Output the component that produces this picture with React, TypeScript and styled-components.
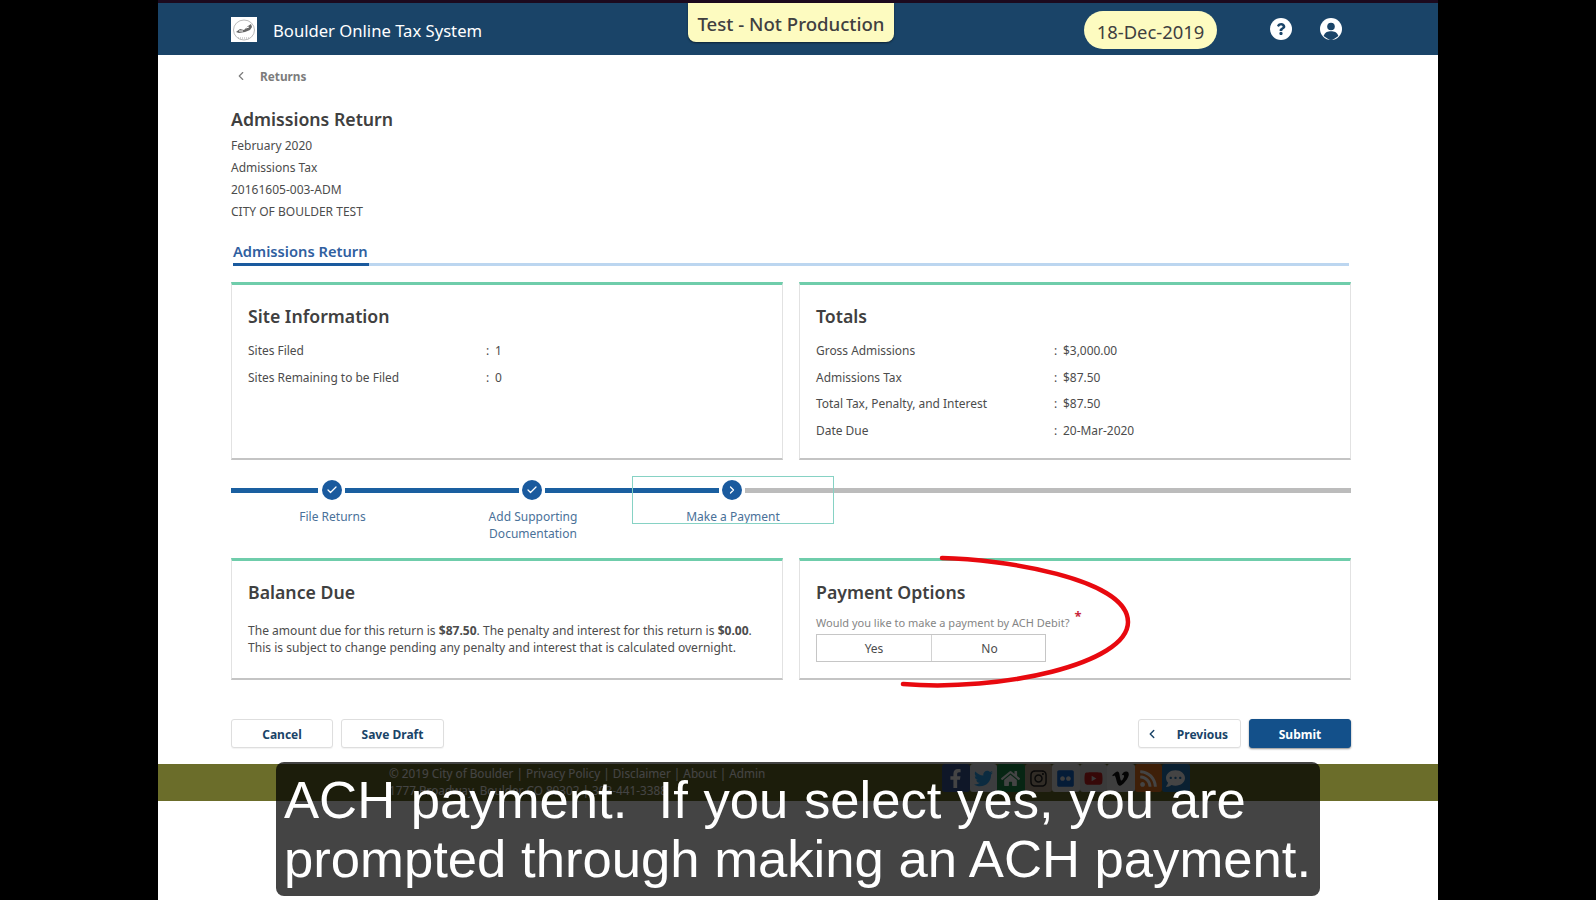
import React from "react";
import styled, { createGlobalStyle } from "styled-components";
import { Check, ChevronLeft, ChevronRight } from "lucide-react";
import { FaFacebookF, FaTwitter, FaHome, FaInstagram, FaFlickr, FaYoutube, FaVimeoV, FaRss, FaCommentDots, FaQuestion } from "react-icons/fa";

const Global = createGlobalStyle`
  html, body { margin: 0; padding: 0; background: #000; }
  body { font-family: "Noto Sans", "Open Sans", sans-serif; color: #3b3b3b; }
  *, *::before, *::after { box-sizing: border-box; }
`;

const Screen = styled.div`
  position: relative;
  width: 1596px;
  height: 900px;
  overflow: hidden;
  background: #000;
  display: flex;
  justify-content: center;
`;
const Page = styled.div`
  width: 1280px;
  height: 900px;
  background: #fff;
  border-top: 3px solid #1c0a1e;
  display: flex;
  flex-direction: column;
`;
const Header = styled.header`
  height: 52px;
  flex: none;
  background: #1a4468;
  position: relative;
  display: flex;
  align-items: center;
  padding: 0 83px 0 73px;
`;
const Logo = styled.svg`
  width: 26px;
  height: 25px;
  flex: none;
  margin-right: 16px;
`;
const AppTitle = styled.div`
  color: #fff;
  font-size: 16.65px;
  width: 415px;
  flex: none;
  padding-top: 2px;
`;
const TestBadge = styled.div`
  width: 206px;
  height: 39px;
  flex: none;
  align-self: flex-start;
  padding-top: 2px;
  background: #fdfbc0;
  border-radius: 0 0 8px 8px;
  box-shadow: 0 1px 2px rgba(0, 0, 0, 0.5);
  color: #404040;
  font-size: 18.6px;
  font-weight: 500;
  display: flex;
  align-items: center;
  justify-content: center;
`;
const DatePill = styled.div`
  width: 133px;
  height: 38px;
  flex: none;
  margin-left: 190px;
  margin-top: 2px;
  padding-top: 2px;
  border-radius: 19px;
  background: #fdfbc0;
  color: #404040;
  font-size: 18.4px;
  display: flex;
  align-items: center;
  justify-content: center;
`;
const RoundIcon = styled.div<{ $gap: number }>`
  width: 22px;
  height: 22px;
  flex: none;
  margin-left: ${(p) => p.$gap}px;
  margin-top: -1px;
  border-radius: 50%;
  background: #fff;
  color: #1a4468;
  display: flex;
  align-items: center;
  justify-content: center;
  overflow: hidden;
`;
const Main = styled.main`
  padding: 0 87px 0 73px;
  flex: none;
`;
const BackRow = styled.div`
  height: 42px;
  display: flex;
  align-items: center;
  color: #7c7c7c;
  font-size: 11.8px;
  font-weight: 700;
  padding-left: 3px;
  gap: 12px;
`;
const PageTitle = styled.h1`
  margin: 10px 0 4px;
  font-size: 17.7px;
  line-height: 24px;
  font-weight: 600;
  color: #404040;
`;
const MetaLine = styled.div`
  font-size: 12px;
  line-height: 22px;
  color: #4c4c4c;
`;
const TabRail = styled.div`
  margin: 17px 2px 16px;
  border-bottom: 3px solid #bcd6f0;
  height: 26px;
`;
const Tab = styled.div`
  display: inline-block;
  height: 26px;
  width: 136px;
  border-bottom: 3px solid #1a5a9e;
  color: #30609f;
  font-size: 14.7px;
  font-weight: 600;
  line-height: 22px;
  white-space: nowrap;
`;
const CardGrid = styled.div`
  display: grid;
  grid-template-columns: 1fr 1fr;
  gap: 16px;
`;
const Card = styled.section<{ $h: number }>`
  height: ${(p) => p.$h}px;
  border: 1px solid #e2e2e2;
  border-top: 3px solid #6fcdab;
  border-bottom: 2px solid #c4c4c4;
  padding: 19px 16px 0;
`;
const CardTitle = styled.h2`
  margin: 0;
  font-size: 17.7px;
  line-height: 24px;
  font-weight: 600;
  color: #404040;
`;
const InfoList = styled.div`
  margin-top: 10px;
`;
const InfoRow = styled.div`
  display: grid;
  grid-template-columns: 238px 9px 1fr;
  font-size: 11.95px;
  line-height: 26.5px;
  color: #4c4c4c;
`;
const Stepper = styled.div`
  display: grid;
  grid-template-columns: 201px 200px 200px 1fr;
  height: 82px;
  margin-top: 16px;
`;
const Step = styled.div<{ $boxed?: boolean }>`
  position: relative;
  &::after {
    content: "";
    display: ${(p) => (p.$boxed ? "block" : "none")};
    position: absolute;
    left: 0;
    top: 0;
    width: 202px;
    height: 48px;
    border: 1px solid #86d2c4;
  }
`;
const Rail = styled.div`
  height: 28px;
  display: flex;
  align-items: center;
  gap: 3px;
`;
const Line = styled.div<{ $off?: boolean }>`
  flex: 1;
  height: 5px;
  background: ${(p) => (p.$off ? "#bcbcbc" : "#1a5fa0")};
`;
const Dot = styled.div<{ $nudge?: boolean }>`
  width: 20px;
  height: 20px;
  flex: none;
  margin-left: ${(p) => (p.$nudge ? 1 : 0)}px;
  border-radius: 50%;
  background: #1a5a9e;
  color: #fff;
  display: flex;
  align-items: center;
  justify-content: center;
`;
const StepLabel = styled.div`
  margin: 5px auto 0;
  width: 120px;
  padding-left: 2px;
  text-align: center;
  font-size: 12px;
  line-height: 16.5px;
  color: #4a7199;
`;
const Paragraph = styled.p`
  margin: 18px 0 0;
  font-size: 12.05px;
  line-height: 17px;
  color: #4c4c4c;
  white-space: nowrap;
`;
const Question = styled.div`
  margin-top: 10px;
  height: 17px;
  font-size: 11px;
  line-height: 17px;
  color: #858585;
`;
const Star = styled.span`
  color: #c8283c;
  font-size: 13px;
  font-weight: 700;
  margin-left: 5px;
  position: relative;
  top: -6px;
`;
const Toggle = styled.div`
  display: grid;
  grid-template-columns: 114px 116px;
  width: 230px;
  height: 28px;
  margin-top: 3px;
  border: 1px solid #c6c6c6;
`;
const ToggleOption = styled.div<{ $divider?: boolean }>`
  border-left: ${(p) => (p.$divider ? "1px solid #d2d2d2" : "none")};
  display: flex;
  align-items: center;
  justify-content: center;
  font-size: 12px;
  color: #4c4c4c;
`;
const Actions = styled.div`
  display: flex;
  margin-top: 39px;
  gap: 8px;
`;
const Spacer = styled.div`
  flex: 1;
`;
const Btn = styled.button<{ $w: number; $primary?: boolean; $icon?: boolean }>`
  width: ${(p) => p.$w}px;
  height: 29px;
  padding: 1px ${(p) => (p.$icon ? 6 : 0)}px 0 0;
  border: 1px solid ${(p) => (p.$primary ? "#13508a" : "#dedede")};
  border-radius: 3px;
  background: ${(p) => (p.$primary ? "#13508a" : "#fff")};
  color: ${(p) => (p.$primary ? "#fff" : "#1a4468")};
  box-shadow: ${(p) => (p.$primary ? "0 1px 2px rgba(0,0,0,.45)" : "0 1px 1px rgba(0,0,0,.05)")};
  font-family: inherit;
  font-size: 12px;
  font-weight: 700;
  display: flex;
  align-items: center;
  justify-content: center;
  gap: ${(p) => (p.$icon ? 18 : 0)}px;
`;
const Footer = styled.footer`
  margin-top: 16px;
  height: 37px;
  flex: none;
  background: #6b6d2a;
  display: flex;
  padding-left: 231px;
`;
const FooterText = styled.div`
  width: 553px;
  flex: none;
  color: #fff;
  font-size: 11.75px;
  line-height: 17px;
  padding-top: 1px;
  white-space: nowrap;
`;
const Socials = styled.div`
  display: flex;
  height: 28px;
`;
const Social = styled.div<{ $bg: string; $fg: string }>`
  width: 27.5px;
  height: 28px;
  border-radius: 3px;
  background: ${(p) => p.$bg};
  color: ${(p) => p.$fg};
  font-size: 19px;
  display: flex;
  align-items: center;
  justify-content: center;
`;
const Caption = styled.div`
  position: absolute;
  left: 276px;
  top: 762px;
  width: 1044px;
  height: 134px;
  padding: 9px 0 0 8px;
  border-radius: 8px;
  background: rgba(0, 0, 0, 0.733);
  color: #fff;
  font-family: "Liberation Sans", Arial, sans-serif;
  font-size: 52.65px;
  line-height: 58.5px;
  white-space: pre;
`;
const CaptionLead = styled.span`
  word-spacing: 1px;
`;
const Ring = styled.svg`
  position: absolute;
  left: 890px;
  top: 550px;
  width: 250px;
  height: 142px;
`;

const socials = [
  { I: FaFacebookF, bg: "#3b5998", fg: "#fff" },
  { I: FaTwitter, bg: "#dfe6ea", fg: "#2aa3ef" },
  { I: FaHome, bg: "#1d8a4a", fg: "#fff" },
  { I: FaInstagram, bg: "#b9a68f", fg: "#222" },
  { I: FaFlickr, bg: "#e8e8e8", fg: "#1668cf" },
  { I: FaYoutube, bg: "#d8d8d8", fg: "#cc1f1f" },
  { I: FaVimeoV, bg: "#e8e8e8", fg: "#111" },
  { I: FaRss, bg: "#e8761e", fg: "#fff" },
  { I: FaCommentDots, bg: "#2878b8", fg: "#fff" },
];

export default function App() {
  return (
    <Screen>
      <Global />
      <Page>
        <Header>
          <Logo viewBox="0 0 26 25">
            <rect width="26" height="25" fill="#fff" />
            <ellipse cx="13" cy="13" rx="10.5" ry="10" fill="none" stroke="#bbb" strokeWidth="1" />
            <path d="M5 15 L9 12 L13 13 L17 9 L20 7 L21 10 L19 13 L14 15 L8 16 Z" fill="#666" />
            <path d="M8 14 L12 14 M15 11 L18 10" stroke="#fff" strokeWidth="1" />
            <path d="M7 21 L19 21" stroke="#aaa" strokeWidth="1" strokeDasharray="1 1" />
          </Logo>
          <AppTitle>Boulder Online Tax System</AppTitle>
          <TestBadge>Test - Not Production</TestBadge>
          <DatePill>18-Dec-2019</DatePill>
          <RoundIcon $gap={53}><FaQuestion size={12} /></RoundIcon>
          <RoundIcon $gap={28}>
            <svg width="22" height="22" viewBox="0 0 22 22">
              <circle cx="11" cy="8.5" r="3.8" fill="#1a4468" />
              <path d="M3.6 18 C5 13.8 8 13.2 11 13.2 C14 13.2 17 13.8 18.4 18 L11 23 Z" fill="#1a4468" />
            </svg>
          </RoundIcon>
        </Header>
        <Main>
          <BackRow>
            <ChevronLeft size={14} strokeWidth={2} />
            Returns
          </BackRow>
          <PageTitle>Admissions Return</PageTitle>
          <MetaLine>February 2020</MetaLine>
          <MetaLine>Admissions Tax</MetaLine>
          <MetaLine>20161605-003-ADM</MetaLine>
          <MetaLine>CITY OF BOULDER TEST</MetaLine>
          <TabRail>
            <Tab>Admissions Return</Tab>
          </TabRail>
          <CardGrid>
            <Card $h={178}>
              <CardTitle>Site Information</CardTitle>
              <InfoList>
                <InfoRow><span>Sites Filed</span><span>:</span><span>1</span></InfoRow>
                <InfoRow><span>Sites Remaining to be Filed</span><span>:</span><span>0</span></InfoRow>
              </InfoList>
            </Card>
            <Card $h={178}>
              <CardTitle>Totals</CardTitle>
              <InfoList>
                <InfoRow><span>Gross Admissions</span><span>:</span><span>$3,000.00</span></InfoRow>
                <InfoRow><span>Admissions Tax</span><span>:</span><span>$87.50</span></InfoRow>
                <InfoRow><span>Total Tax, Penalty, and Interest</span><span>:</span><span>$87.50</span></InfoRow>
                <InfoRow><span>Date Due</span><span>:</span><span>20-Mar-2020</span></InfoRow>
              </InfoList>
            </Card>
          </CardGrid>
          <Stepper>
            <Step>
              <Rail><Line /><Dot $nudge><Check size={12} strokeWidth={2.5} /></Dot><Line /></Rail>
              <StepLabel>File Returns</StepLabel>
            </Step>
            <Step>
              <Rail><Line /><Dot><Check size={12} strokeWidth={2.5} /></Dot><Line /></Rail>
              <StepLabel>Add Supporting Documentation</StepLabel>
            </Step>
            <Step $boxed>
              <Rail><Line /><Dot><ChevronRight size={12} strokeWidth={2.5} /></Dot><Line $off /></Rail>
              <StepLabel>Make a Payment</StepLabel>
            </Step>
            <Rail><Line $off /></Rail>
          </Stepper>
          <CardGrid>
            <Card $h={122}>
              <CardTitle>Balance Due</CardTitle>
              <Paragraph>
                The amount due for this return is <b>$87.50</b>. The penalty and interest for this return is <b>$0.00</b>.
                <br />
                This is subject to change pending any penalty and interest that is calculated overnight.
              </Paragraph>
            </Card>
            <Card $h={122}>
              <CardTitle>Payment Options</CardTitle>
              <Question>Would you like to make a payment by ACH Debit?<Star>*</Star></Question>
              <Toggle>
                <ToggleOption>Yes</ToggleOption>
                <ToggleOption $divider>No</ToggleOption>
              </Toggle>
            </Card>
          </CardGrid>
          <Actions>
            <Btn $w={102}>Cancel</Btn>
            <Btn $w={103}>Save Draft</Btn>
            <Spacer />
            <Btn $w={103} $icon><ChevronLeft size={14} strokeWidth={2.5} />Previous</Btn>
            <Btn $w={102} $primary>Submit</Btn>
          </Actions>
        </Main>
        <Footer>
          <FooterText>
            © 2019 City of Boulder | Privacy Policy | Disclaimer | About | Admin
            <br />
            1777 Broadway, Boulder CO 80302 | 303-441-3388
          </FooterText>
          <Socials>
            {socials.map(({ I, bg, fg }, i) => (
              <Social key={i} $bg={bg} $fg={fg}><I /></Social>
            ))}
          </Socials>
        </Footer>
      </Page>
      <Ring viewBox="890 550 250 142">
        <path
          d="M942 558 C1000 559 1128 578 1128 622 C1128 664 1000 692 903 684"
          fill="none"
          stroke="#e8090f"
          strokeWidth="4.5"
          strokeLinecap="round"
        />
      </Ring>
      <Caption><CaptionLead>ACH payment.  If you select yes, you are</CaptionLead>{"\n"}prompted through making an ACH payment.</Caption>
    </Screen>
  );
}
